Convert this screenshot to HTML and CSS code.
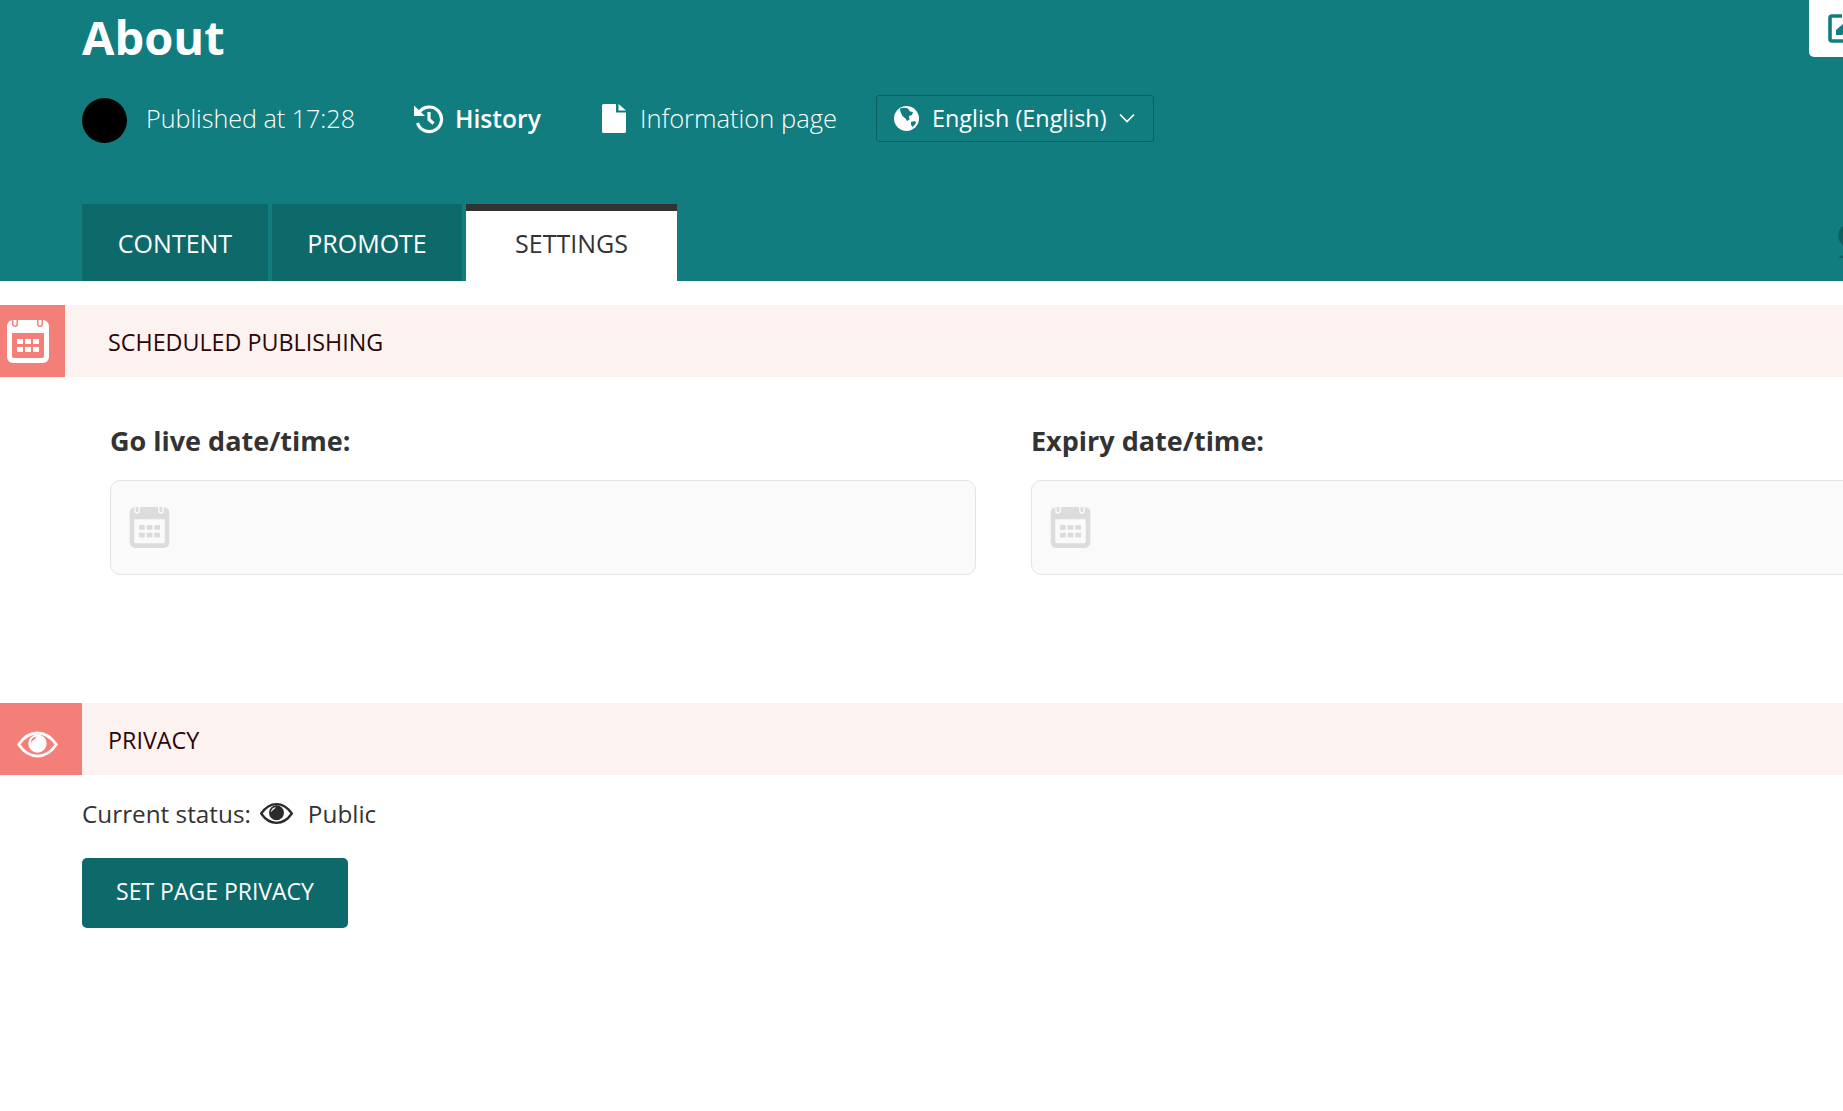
FILE: index.html
```html
<!DOCTYPE html>
<html lang="en">
<head>
    <meta charset="UTF-8">
    <title>About</title>
    <link rel="stylesheet" href="styles.css">
</head>
<body>
    <header class="page-header">
        <h1 class="page-title">About</h1>
        <a class="edit-button" href="#" aria-label="Edit">
            <svg width="36" height="30" viewBox="0 0 36 30"><path d="M14 3H4a2 2 0 0 0-2 2v21a2 2 0 0 0 2 2h22a2 2 0 0 0 2-2V17" fill="none" stroke="#117d7f" stroke-width="3.6"/><path d="M8 22v-5L24 3l5 5-15 14z" fill="#117d7f"/></svg>
        </a>
        <svg class="corner-glyph" width="12" height="34" viewBox="0 0 12 34"><path d="M9 2C4 3 2 8 3 13c1 4 4 6 7 6" fill="none" stroke="#0e5f60" stroke-width="5"/><path d="M0 33l9-5v5z" fill="#0e5f60"/></svg>
        <div class="meta-row">
            <span class="status-dot"></span>
            <span class="meta-text published">Published at 17:28</span>
            <a class="history-link" href="#">
                <svg width="31" height="31" viewBox="0 0 31 31"><path d="M6 9.500A12.300 12.300 0 1 1 4.500 20" fill="none" stroke="#fff" stroke-width="3.200"/><path d="M1 2.500l11 10.500H1z" fill="#fff"/><path d="M16 9v7.500l4.500 4" fill="none" stroke="#fff" stroke-width="3.200"/></svg>
                History
            </a>
            <span class="page-type">
                <svg width="24" height="29" viewBox="0 0 24 29"><path d="M1.500 0H14v8.500h10V27.500a1.500 1.500 0 0 1-1.500 1.500h-21A1.500 1.500 0 0 1 0 27.500V1.500A1.500 1.500 0 0 1 1.500 0z" fill="#fff"/><path d="M16.500 0L24 6.500h-7.500z" fill="#fff"/></svg>
                <span class="meta-text page-type-text">Information page</span>
            </span>
            <button class="lang-select">
                <svg width="25" height="25" viewBox="0 0 25 25"><circle cx="12.500" cy="12.500" r="12.500" fill="#fff"/><path d="M6 2.500c3-1 6-1 8 0l2 3 3 .5-1 3-3 1 .5 3.500-2.500 1.500-1.500-2.500-3-2.500-2-4z" fill="#117d7f"/><path d="M17 16l4-1 1 2-3 4-2-2z" fill="#117d7f"/></svg>
                English (English)
                <svg class="chevron" width="16" height="10" viewBox="0 0 16 10"><path d="M1 1.500l7 7 7-7" fill="none" stroke="#fff" stroke-width="1.700"/></svg>
            </button>
        </div>
        <nav class="tabs">
            <a class="tab tab-content" href="#">CONTENT</a>
            <a class="tab tab-promote" href="#">PROMOTE</a>
            <a class="tab tab-settings" href="#">SETTINGS</a>
        </nav>
    </header>

    <section class="panel panel-schedule">
        <div class="panel-head">
            <div class="panel-icon icon-narrow">
                <svg width="42" height="44" viewBox="0 0 42 44"><use href="#calendar"/></svg>
            </div>
            <h2 class="panel-title">SCHEDULED PUBLISHING</h2>
        </div>
        <div class="date-fields">
            <div class="date-field">
                <label class="date-label">Go live date/time:</label>
                <div class="date-input">
                    <svg class="date-icon" width="41" height="42" viewBox="0 0 42 44"><use href="#calendar"/></svg>
                </div>
            </div>
            <div class="date-field">
                <label class="date-label">Expiry date/time:</label>
                <div class="date-input">
                    <svg class="date-icon" width="41" height="42" viewBox="0 0 42 44"><use href="#calendar"/></svg>
                </div>
            </div>
        </div>
    </section>

    <section class="panel panel-privacy">
        <div class="panel-head">
            <div class="panel-icon icon-wide">
                <svg width="41" height="27" viewBox="0 0 42 28"><path d="M1.500 14C7 6 13.500 2 21 2s14 4 19.500 12C35 22 28.500 26 21 26S7 22 1.500 14z" fill="none" stroke="#fff" stroke-width="3"/><circle cx="21" cy="13" r="9.500" fill="#fff"/><path d="M14 12c0-3 3-6 6-6-1 2-4 4-6 6z" fill="#f47f79"/></svg>
            </div>
            <h2 class="panel-title">PRIVACY</h2>
        </div>
        <div class="privacy-body">
            <p class="privacy-status">
                <span>Current status:</span>
                <svg class="status-eye" width="33" height="23" viewBox="0 0 42 28"><path d="M1.500 14C7 6 13.500 2 21 2s14 4 19.500 12C35 22 28.500 26 21 26S7 22 1.500 14z" fill="none" stroke="#2b2b2b" stroke-width="3"/><circle cx="21" cy="13" r="9.500" fill="#2b2b2b"/><path d="M14 12c0-3 3-6 6-6-1 2-4 4-6 6z" fill="#fff"/></svg>
                <span>Public</span>
            </p>
            <button class="privacy-button">SET PAGE PRIVACY</button>
        </div>
    </section>

    <svg class="icon-defs" width="0" height="0">
        <symbol id="calendar" viewBox="0 0 42 44">
            <path fill-rule="evenodd" d="M6 1h30a6 6 0 0 1 6 6v31a6 6 0 0 1-6 6H6a6 6 0 0 1-6-6V7a6 6 0 0 1 6-6zM5 14v23a2 2 0 0 0 2 2h28a2 2 0 0 0 2-2V14zM10 20h6v5h-6zM18 20h6v5h-6zM26 20h6v5h-6zM10 28h6v5h-6zM18 28h6v5h-6zM26 28h6v5h-6zM5 1v4a3 3 0 0 0 6 0V1H9.500v4a1.500 1.500 0 0 1-3 0V1zM30 1v4a3 3 0 0 0 6 0V1h-1.500v4a1.500 1.500 0 0 1-3 0V1z"/>
        </symbol>
    </svg>
</body>
</html>
```

FILE: styles.css
```css
html, body {
    margin: 0;
    padding: 0;
    height: 100%;
    overflow: hidden;
}

body {
    width: 1843px;
    font-family: "Open Sans", sans-serif;
    background-color: #fff;
    color: #333;
}

a {
    color: inherit;
    text-decoration: none;
}

/* header */
.page-header {
    position: relative;
    height: 281px;
    padding-left: 82px;
    box-sizing: border-box;
    background-color: #117d7f;
    color: #fff;
    overflow: hidden;
}

.page-title {
    margin: 0;
    height: 76px;
    font-size: 47px;
    line-height: 74px;
    font-weight: 700;
}

.edit-button {
    position: absolute;
    top: 0;
    right: 0;
    width: 34px;
    height: 57px;
    box-sizing: border-box;
    padding: 13px 0 0 19px;
    background-color: #fff;
    border-bottom-left-radius: 5px;
    overflow: hidden;
}

.edit-button svg {
    display: block;
}

.corner-glyph {
    position: absolute;
    top: 225px;
    right: -7px;
}

.meta-row {
    display: flex;
    align-items: center;
    height: 48px;
    margin-top: 18px;
}

.status-dot {
    width: 45px;
    height: 45px;
    margin: 5px 19px 0 0;
    border-radius: 50%;
    background-color: #000;
    flex: none;
}

.meta-text {
    font-size: 25.100px;
    font-weight: 300;
}

.published {
    width: 267px;
}

.history-link {
    display: flex;
    align-items: center;
    gap: 11px;
    width: 189px;
    font-size: 24.600px;
    font-weight: 600;
}

.page-type {
    display: flex;
    align-items: center;
    gap: 14px;
    width: 274px;
}

.page-type-text {
    font-size: 25.500px;
}

.lang-select {
    display: flex;
    align-items: center;
    width: 278px;
    height: 47px;
    padding: 0 0 0 17px;
    box-sizing: border-box;
    background: transparent;
    border: 1px solid #0e5c5e;
    border-radius: 3px;
    color: #fff;
    font-family: inherit;
    font-size: 23.400px;
    font-weight: 400;
}

.lang-select svg:first-child {
    margin-right: 13px;
}

.chevron {
    margin-left: 12px;
}

.tabs {
    display: flex;
    gap: 4px;
    margin-top: 62px;
}

.tab {
    display: flex;
    align-items: center;
    justify-content: center;
    height: 77px;
    box-sizing: border-box;
    background-color: #0e696a;
    font-size: 25px;
    font-weight: 500;
}

.tab-content {
    width: 186px;
}

.tab-promote {
    width: 190px;
}

.tab-settings {
    width: 211px;
    padding-bottom: 7px;
    background-color: #fff;
    border-top: 7px solid #333;
    color: #333;
}

/* panels */
.panel-schedule {
    margin-top: 24px;
    height: 398px;
}

.panel-head {
    display: flex;
    align-items: center;
    height: 72px;
    background-color: #fcf2f0;
}

.panel-icon {
    display: flex;
    align-items: center;
    height: 72px;
    box-sizing: border-box;
    background-color: #f47f79;
    flex: none;
    fill: #fff;
}

.icon-narrow {
    width: 65px;
    margin-right: 43px;
    padding-left: 7px;
}

.icon-wide {
    width: 82px;
    margin-right: 26px;
    padding: 11px 0 0 17px;
}

.panel-title {
    margin: 1px 0 0;
    font-size: 23.300px;
    font-weight: 400;
    color: #2a0606;
}

.date-fields {
    display: grid;
    grid-template-columns: 866px 866px;
    column-gap: 55px;
    padding: 45px 0 0 110px;
}

.date-label {
    display: block;
    height: 58px;
    font-size: 27px;
    line-height: 38px;
    font-weight: 700;
}

.date-input {
    display: flex;
    align-items: center;
    height: 95px;
    padding: 0 0 2px 18px;
    box-sizing: border-box;
    background-color: #fafafa;
    border: 1px solid #e4e4e4;
    border-radius: 10px;
}

.date-icon {
    fill: #dcdcdc;
}

.icon-defs {
    position: absolute;
}

.privacy-body {
    padding: 18px 0 0 82px;
}

.privacy-status {
    display: flex;
    align-items: center;
    height: 40px;
    margin: 0 0 25px;
    font-size: 24.300px;
    color: #333;
}

.status-eye {
    margin: 0 15px 0 9px;
}

.privacy-button {
    display: block;
    width: 266px;
    height: 70px;
    padding: 0 0 4px;
    border: none;
    border-radius: 5px;
    background-color: #0e696a;
    color: #fff;
    font-family: inherit;
    font-size: 23px;
}
```
